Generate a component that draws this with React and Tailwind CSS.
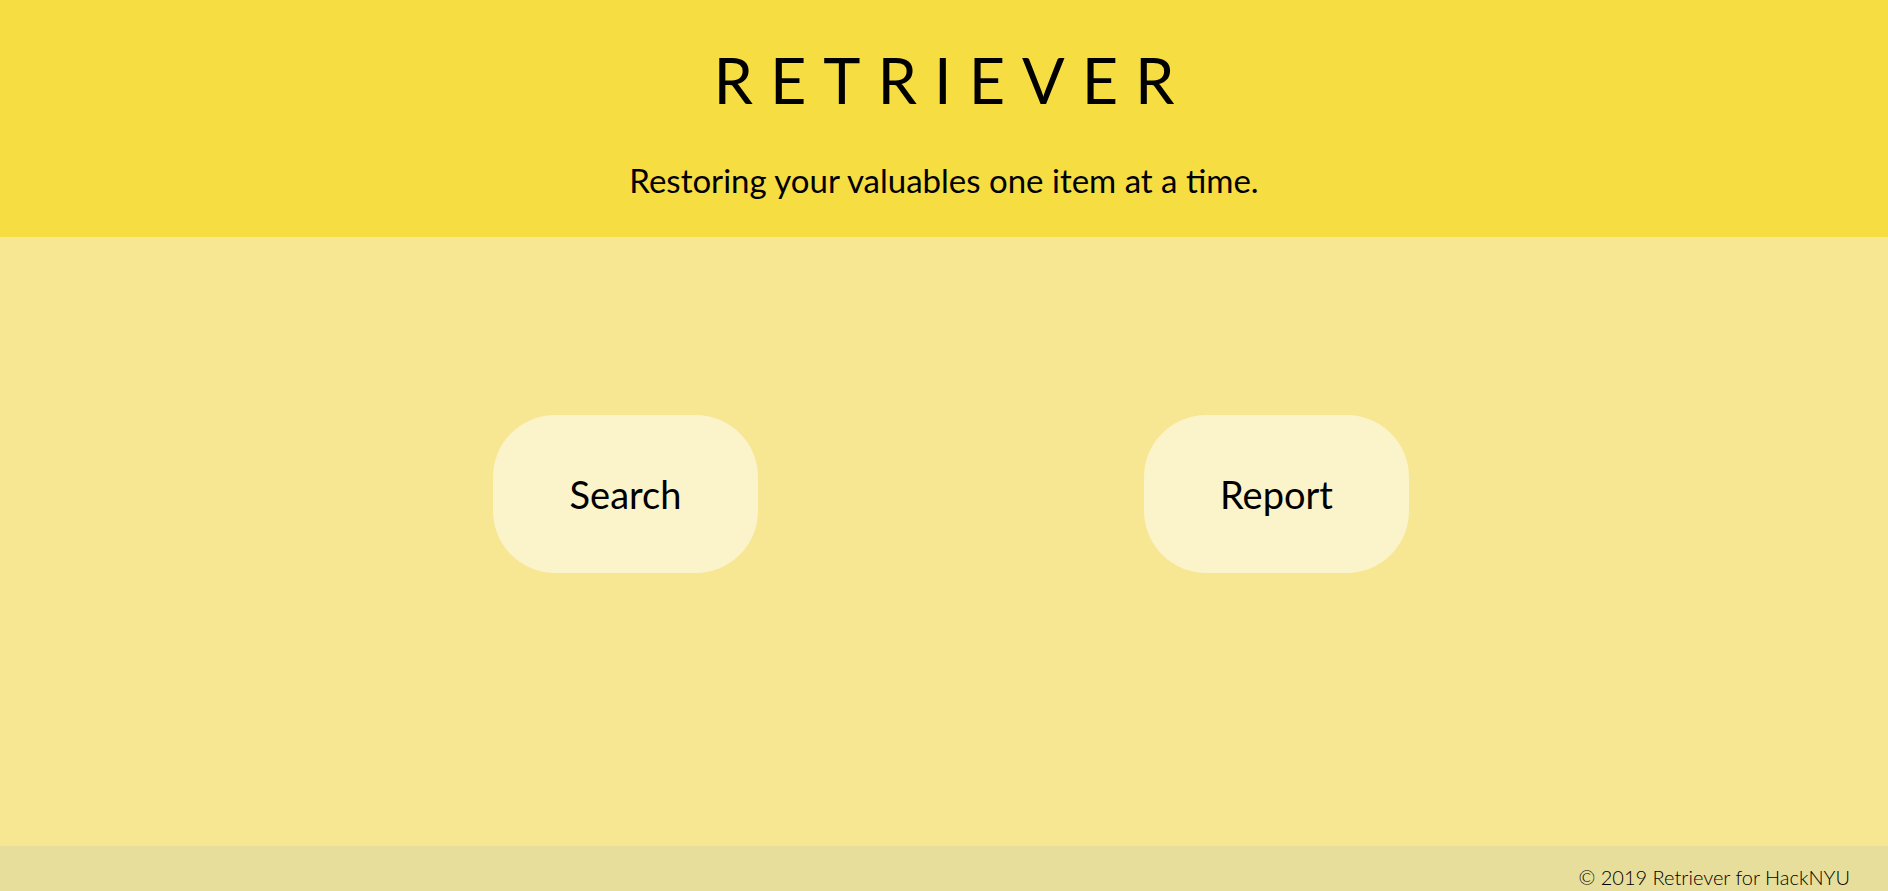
import React from 'react';

const font = { fontFamily: 'Lato, "Open Sans", sans-serif' };

function PillButton({ label }) {
  return (
    <button className="w-[265px] h-[158px] rounded-[62px] bg-[#fbf3c9] text-black text-[38px] flex items-center justify-center">
      {label}
    </button>
  );
}

export default function App() {
  return (
    <div className="min-h-screen flex flex-col text-black" style={font}>
      {/* Header */}
      <header className="h-[237px] bg-[#f6dd42] flex flex-col items-center">
        <h1 className="mt-[44px] text-[63px] leading-[72px] tracking-[17px] pl-[17px] font-normal">RETRIEVER</h1>
        <p className="mt-[45px] text-[33px] leading-[38px]">Restoring your valuables one item at a time.</p>
      </header>

      {/* Main */}
      <main className="h-[609px] bg-[#f7e692] flex justify-center gap-[386px] pl-[14px] pt-[178px]">
        <PillButton label="Search" />
        <PillButton label="Report" />
      </main>

      {/* Footer */}
      <footer className="h-[45px] bg-[#e8de9b] flex justify-end items-end pr-[38px]">
        <span className="text-[20px] leading-[28px] font-light">© 2019 Retriever for HackNYU</span>
      </footer>
    </div>
  );
}
